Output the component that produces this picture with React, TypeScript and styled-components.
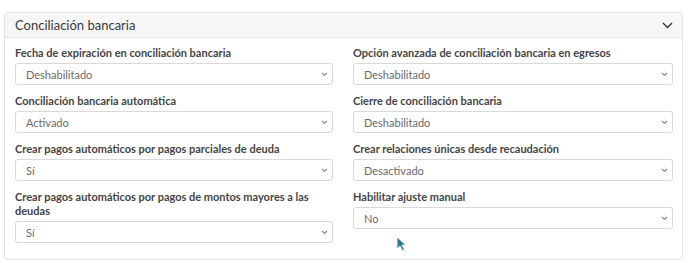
import styled, { createGlobalStyle } from "styled-components";

const GlobalStyle = createGlobalStyle`
  body {
    margin: 0;
    background: #ffffff;
    font-family: Lato, "Open Sans", "Liberation Sans", sans-serif;
  }
`;

const Page = styled.div`
  padding: 12px 5px 0 4px;
`;

const Card = styled.div`
  border: 1px solid #e3e3e3;
  border-radius: 3px;
  background: #fff;
`;

const CardHeader = styled.div`
  display: flex;
  align-items: center;
  justify-content: space-between;
  height: 24px;
  padding: 0 9px 0 10px;
  background: #f6f6f6;
  border-bottom: 1px solid #e6e6e6;
  color: #3a3a3a;
  font-size: 13px;
`;

const CardBody = styled.div`
  display: grid;
  grid-template-columns: 318px 320px;
  column-gap: 20px;
  row-gap: 9px;
  align-items: start;
  padding: 8px 10px 16px 10px;
`;

const Field = styled.div`
  display: flex;
  flex-direction: column;
`;

const Label = styled.label`
  font-size: 11px;
  font-weight: 700;
  line-height: 14px;
  color: #454545;
  margin-bottom: 3px;
`;

const SelectWrap = styled.div`
  position: relative;
  height: 22px;
`;

const Select = styled.select`
  appearance: none;
  display: block;
  width: 100%;
  height: 22px;
  box-sizing: border-box;
  border: 1px solid #d9d9d9;
  border-radius: 3px;
  background: #fff;
  padding: 0 20px 0 10px;
  font-family: inherit;
  font-size: 11px;
  color: #6a6a6a;
  outline: none;
`;

const Arrow = styled.svg`
  position: absolute;
  right: 5px;
  top: 9px;
  pointer-events: none;
`;

const Cursor = styled.svg`
  position: absolute;
  left: 396px;
  top: 236px;
`;

type Item = { label: string; value: string };

const fields: Item[] = [
  { label: "Fecha de expiración en conciliación bancaria", value: "Deshabilitado" },
  { label: "Opción avanzada de conciliación bancaria en egresos", value: "Deshabilitado" },
  { label: "Conciliación bancaria automática", value: "Activado" },
  { label: "Cierre de conciliación bancaria", value: "Deshabilitado" },
  { label: "Crear pagos automáticos por pagos parciales de deuda", value: "Sí" },
  { label: "Crear relaciones únicas desde recaudación", value: "Desactivado" },
  { label: "Crear pagos automáticos por pagos de montos mayores a las deudas", value: "Sí" },
  { label: "Habilitar ajuste manual", value: "No" },
];

const SelectField = ({ label, value }: Item) => (
  <Field>
    <Label>{label}</Label>
    <SelectWrap>
      <Select defaultValue={value}>
        <option>{value}</option>
      </Select>
      <Arrow width="7" height="5" viewBox="0 0 7 5">
        <path d="M1 1l2.5 2.5L6 1" fill="none" stroke="#8a8a8a" strokeWidth="1.1" />
      </Arrow>
    </SelectWrap>
  </Field>
);

const App = () => {
  return (
    <Page>
      <GlobalStyle />
      <Card>
        <CardHeader>
          <span>Conciliación bancaria</span>
          <svg width="11" height="7" viewBox="0 0 11 7">
            <path d="M1 1l4.5 4.5L10 1" fill="none" stroke="#333" strokeWidth="1.4" />
          </svg>
        </CardHeader>
        <CardBody>
          {fields.map((f) => (
            <SelectField key={f.label} {...f} />
          ))}
        </CardBody>
      </Card>
      <Cursor width="12" height="16" viewBox="0 0 12 16">
        <path d="M1 1v12l3-3 2.5 5 2-1-2.5-5H10z" fill="#2f7d8c" stroke="#fff" strokeWidth="0.8" />
      </Cursor>
    </Page>
  );
};

export default App;
